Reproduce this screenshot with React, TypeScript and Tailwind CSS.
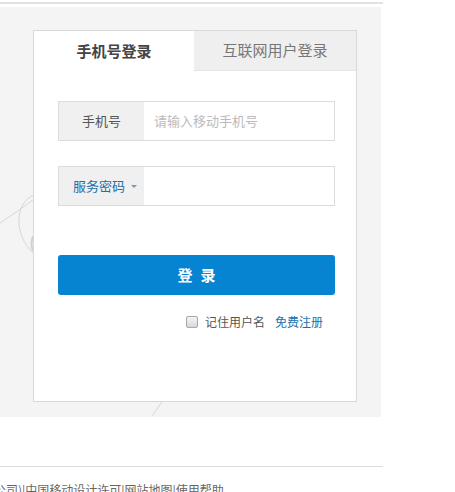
import React from "react";

export default function App() {
  const font = { fontFamily: '"Noto Sans CJK SC", "Microsoft YaHei", sans-serif' };
  return (
    <div className="w-[455px] h-[492px] bg-white overflow-hidden" style={font}>
      <div className="h-[7px] pt-[2px]">
        <div className="w-[383px] h-[2px] bg-[#e2e2e2]" />
      </div>
      <div className="relative w-[381px] h-[410px] bg-[#f4f4f4] pt-[23px] pl-[33px]">
        <svg className="absolute left-0 top-0" width="381" height="410" viewBox="0 0 381 410" fill="none">
          <path d="M0 216 C 12 208, 24 200, 34 192" stroke="#d6d6d6" strokeWidth="1" />
          <path d="M34 188 C 14 196, 14 228, 33 246" stroke="#d6d6d6" strokeWidth="1" />
          <path d="M33 229 C 31 235, 31 240, 33 244" stroke="#d0d0d0" strokeWidth="2" />
          <path d="M152 409 L 162 395" stroke="#d6d6d6" strokeWidth="1" />
        </svg>
        <div className="relative w-[324px] h-[372px] border border-[#d9d9d9] bg-white">
          <div className="flex h-[40px]">
            <div className="w-[160px] flex items-center justify-center text-[15px] font-bold text-[#444]">
              手机号登录
            </div>
            <div className="w-[162px] flex items-center justify-center text-[15px] text-[#777] bg-[#efefef] border-b border-[#e4e4e4]">
              互联网用户登录
            </div>
          </div>
          <div className="pl-[24px] pt-[30px]">
            <div className="flex w-[277px] h-[40px] border border-[#dcdcdc]">
              <div className="w-[85px] bg-[#f0f0f0] flex items-center justify-center text-[13px] text-[#555]">
                手机号
              </div>
              <div className="flex-1 flex items-center pl-[10px] text-[13px] text-[#bbb]">
                请输入移动手机号
              </div>
            </div>
            <div className="mt-[25px] flex w-[277px] h-[40px] border border-[#dcdcdc]">
              <div className="w-[85px] bg-[#f0f0f0] flex items-center pl-[14px] text-[13px] text-[#1b6fab]">
                服务密码
                <span className="ml-[6px] mt-[1px] w-0 h-0 border-l-[3px] border-r-[3px] border-t-[3px] border-l-transparent border-r-transparent border-t-[#6a9cc4]" />
              </div>
              <div className="flex-1" />
            </div>
            <div className="mt-[49px] w-[277px] h-[40px] rounded-[3px] bg-[#0784d1] flex items-center justify-center text-white text-[15px] font-bold tracking-[8px] pl-[8px]">
              登录
            </div>
            <div className="mt-[20px] flex items-center h-[14px] pl-[128px]">
              <span className="w-[12px] h-[12px] rounded-[2px] border border-[#a8a8a8] bg-gradient-to-b from-[#f4f4f4] to-[#d8d8d8]" />
              <span className="ml-[7px] text-[12px] text-[#555]">记住用户名</span>
              <span className="ml-[10px] text-[12px] text-[#1b6fab]">免费注册</span>
            </div>
          </div>
        </div>
      </div>
      <div className="h-[49px]" />
      <div className="w-[383px] h-[1px] bg-[#dedede]" />
      <div className="mt-[15px] -ml-[6px] whitespace-nowrap text-[12px] text-[#666] leading-[16px]">
        公司)|中国移动设计许可|网站地图|使用帮助
      </div>
    </div>
  );
}
